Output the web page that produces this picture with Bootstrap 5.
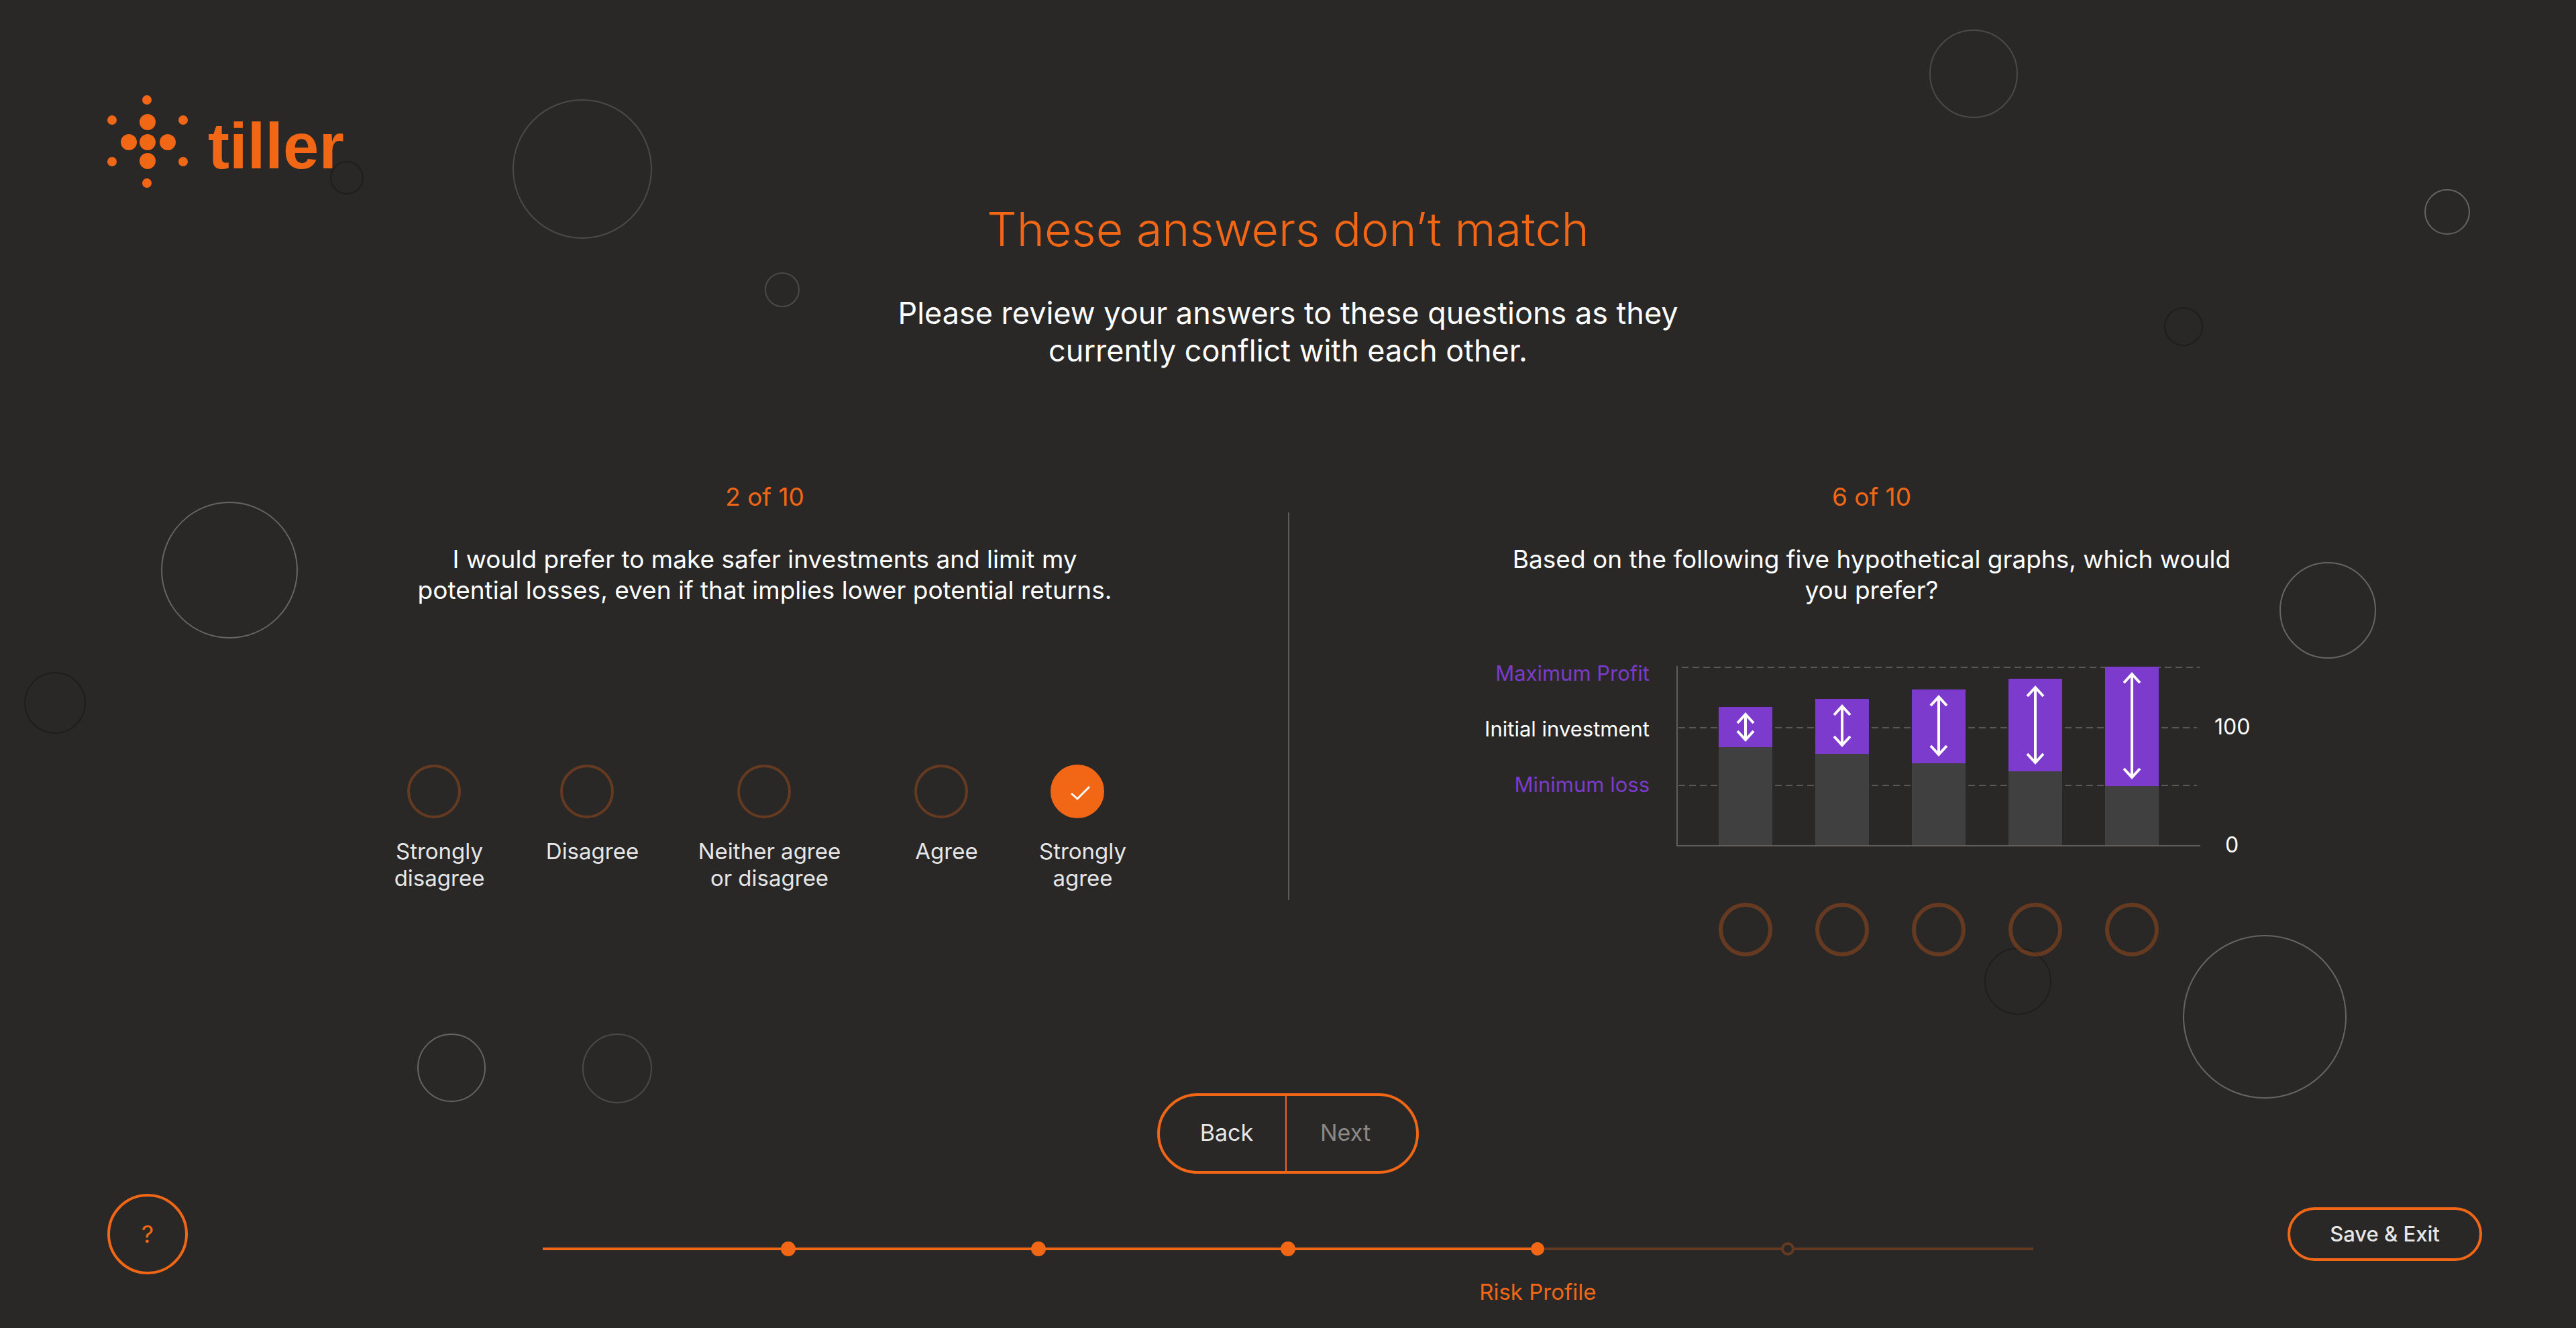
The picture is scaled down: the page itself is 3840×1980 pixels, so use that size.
<!DOCTYPE html>
<html lang="en">
<head>
<meta charset="utf-8">
<meta name="viewport" content="width=device-width, initial-scale=1">
<title>tiller – These answers don’t match</title>
<link rel="stylesheet" href="https://cdn.jsdelivr.net/npm/bootstrap@5.3.0/dist/css/bootstrap.min.css">
<style>
  :root {
    --ink: #292826;
    --brand: #f26716;
    --brand-dim: rgba(242, 103, 22, .3);
    --brand-track: #653a22;
    --violet: #7c3bcd;
    --soft: #e6e6e6;
  }
  body {
    background: var(--ink);
    color: #fff;
    font-family: Inter, "Open Sans", sans-serif;
    font-size: 33px;
    line-height: 40px;
  }
  .page { min-height: 100vh; isolation: isolate; padding-bottom: 34px; }
  .bubbles { z-index: -1; }
  .bubbles circle { fill: none; stroke-width: 2; }
  .b-light { stroke: #666564; }
  .b-mid { stroke: #4b4a49; }
  .b-dark { stroke: #1f1e1d; }

  .top-bar { padding: 142px 160px 0; }
  .brand-link { height: 138px; gap: 30px; color: var(--brand); }
  .brand-link:hover { color: var(--brand); }
  .brand-word { font: bold 96px/138px "Liberation Sans", Arial, sans-serif; padding-top: 14px; }

  .hero { padding-top: 22px; }
  .hero-title { font-size: 70px; line-height: 80px; font-weight: 300; color: var(--brand); margin-bottom: 57px; }
  .hero-text { font-size: 45px; line-height: 56px; max-width: 1240px; }

  .compare { display: grid; grid-template-columns: 1560fr 0 1740fr; padding: 167px 4.6875% 0 9.375%; }
  .compare-rule { width: 2px; margin: 46px 0 84px; background: #5c5b5a; }
  .q-count { font-size: 37px; line-height: 46px; color: var(--brand); margin-bottom: 47px; }
  .q-text { font-size: 37px; line-height: 46px; font-weight: 400; max-width: 1160px; }

  .answer-radio {
    appearance: none; -webkit-appearance: none;
    width: 80px; height: 80px; margin: 0; flex: none;
    border: 4px solid var(--brand-dim); border-radius: 50%;
    background: transparent center / 80px 80px no-repeat; background-origin: border-box;
  }
  .answer-radio.thick { border-width: 6px; }
  .answer-radio:checked {
    border-color: var(--brand);
    background-color: var(--brand);
    background-image: url("data:image/svg+xml,%3Csvg xmlns='http://www.w3.org/2000/svg' viewBox='0 0 80 80'%3E%3Cpath d='M31 43l9 8 18-18' fill='none' stroke='%23fff' stroke-width='3'/%3E%3C/svg%3E");
  }
  .likert { display: grid; grid-template-columns: 228px 228px 300px 228px 178px; padding: 237px 36px 0 0; }
  .likert label { gap: 29px; color: var(--soft); }
  .likert .answer-radio { margin-right: 16px; }

  .chart { display: grid; grid-template-columns: 300px 782px 100px; padding-top: 81px; }
  .chart-names { font-size: 31px; gap: 43px; padding-right: 40px; text-align: right; white-space: nowrap; }
  .violet { color: var(--violet); }
  .chart-plot { margin-top: 9px; }
  .chart-scale { font-size: 32px; padding: 80px 28px 0 20px; gap: 136px; text-align: center; }
  .chart-picks { grid-column: 2; padding: 66px 0 0 63px; gap: 64px; }

  .pager { height: 120px; border: 4px solid var(--brand); border-radius: 60px; width: 390px; }
  .pager button { flex: 1 1 0; border: 0; background: none; font-size: 34px; padding: 0 0 2px 12px; color: var(--soft); }
  .pager button + button { border-left: 2px solid var(--brand); padding: 0 18px 2px 0; }
  .pager button:disabled { color: #8a8988; }

  .bottom-bar { display: grid; grid-template-columns: 669fr 2222fr 669fr; padding: 30px 140px 0; align-items: start; }
  .help-btn { width: 120px; height: 120px; margin-left: 20px; border: 4px solid var(--brand); border-radius: 50%; background: none; color: var(--brand); font-size: 36px; }
  .exit-btn { width: 290px; height: 80px; margin-top: 20px; border: 4px solid var(--brand); border-radius: 40px; background: none; color: var(--soft); font-size: 31px; font-weight: 500; }

  .steps { padding: 70px 0 0; margin: 0; color: var(--brand); }
  .steps li { flex: 372 1 0; min-width: 0; gap: 32px; background: linear-gradient(var(--brand), var(--brand)) 0 10px / 100% 4px no-repeat; }
  .steps .stub { flex-grow: 180; }
  .steps li.current { background-image: linear-gradient(90deg, var(--brand) 50%, var(--brand-track) 50%); }
  .steps li.todo { background-image: linear-gradient(var(--brand-track), var(--brand-track)); }
  .step-dot { width: 22px; height: 22px; margin: 1px 0; border-radius: 50%; background: var(--brand); }
  .current .step-dot, .todo .step-dot { width: 20px; height: 20px; margin: 2px 0; }
  .todo .step-dot { border: 4px solid var(--brand-track); background: var(--ink); }
</style>
</head>
<body>
<div class="page position-relative d-flex flex-column">
  <svg class="bubbles position-absolute top-0 start-0 w-100 h-100" viewBox="0 0 3840 1980" preserveAspectRatio="xMidYMid slice" aria-hidden="true">
    <g class="b-light">
      <circle cx="3648" cy="316" r="33"/><circle cx="342" cy="850" r="101"/>
      <circle cx="3470" cy="910" r="71"/><circle cx="3376" cy="1516" r="121"/>
      <circle cx="673" cy="1592" r="50"/>
    </g>
    <g class="b-mid">
      <circle cx="868" cy="252" r="103"/><circle cx="1166" cy="432" r="25"/>
      <circle cx="2942" cy="110" r="65"/><circle cx="920" cy="1593" r="51"/>
    </g>
    <g class="b-dark">
      <circle cx="517" cy="265" r="24"/><circle cx="3255" cy="487" r="28"/>
      <circle cx="82" cy="1048" r="45"/><circle cx="3008" cy="1463" r="49"/>
    </g>
  </svg>

  <header class="top-bar d-flex">
    <a href="#" class="brand-link d-flex align-items-center text-decoration-none">
      <svg width="120" height="138" viewBox="0 0 120 138" fill="currentColor" aria-hidden="true">
        <circle cx="60" cy="40" r="12"/><circle cx="32" cy="70" r="12"/><circle cx="60" cy="70" r="12"/><circle cx="90" cy="70" r="12"/><circle cx="60" cy="98" r="12"/>
        <circle cx="59" cy="7" r="7"/><circle cx="7" cy="37" r="7"/><circle cx="113" cy="37" r="7"/><circle cx="7" cy="99" r="7"/><circle cx="113" cy="99" r="7"/><circle cx="59" cy="131" r="7"/>
      </svg>
      <span class="brand-word">tiller</span>
    </a>
  </header>

  <main>
    <section class="hero text-center">
      <h1 class="hero-title">These answers don’t match</h1>
      <p class="hero-text mx-auto mb-0">Please review your answers to these questions as they<br>currently conflict with each other.</p>
    </section>

    <div class="compare">
      <section class="d-flex flex-column align-items-center text-center" aria-labelledby="q2">
        <p class="q-count">2 of 10</p>
        <h2 class="q-text mb-0" id="q2">I would prefer to make safer investments and limit my<br>potential losses, even if that implies lower potential returns.</h2>
        <div class="likert" role="radiogroup" aria-labelledby="q2">
          <label class="d-flex flex-column align-items-center"><input class="answer-radio" type="radio" name="safer"><span>Strongly<br>disagree</span></label>
          <label class="d-flex flex-column align-items-center"><input class="answer-radio" type="radio" name="safer"><span>Disagree</span></label>
          <label class="d-flex flex-column align-items-center"><input class="answer-radio" type="radio" name="safer"><span>Neither agree<br>or disagree</span></label>
          <label class="d-flex flex-column align-items-center"><input class="answer-radio" type="radio" name="safer"><span>Agree</span></label>
          <label class="d-flex flex-column align-items-center"><input class="answer-radio" type="radio" name="safer" checked><span>Strongly<br>agree</span></label>
        </div>
      </section>

      <div class="compare-rule"></div>

      <section class="d-flex flex-column align-items-center text-center" aria-labelledby="q6">
        <p class="q-count">6 of 10</p>
        <h2 class="q-text mb-0" id="q6">Based on the following five hypothetical graphs, which would<br>you prefer?</h2>
        <div class="chart">
          <div class="chart-names d-flex flex-column">
            <span class="violet">Maximum Profit</span>
            <span>Initial investment</span>
            <span class="violet">Minimum loss</span>
          </div>
          <svg class="chart-plot" width="782" height="269" viewBox="0 0 782 269" role="img" aria-label="Maximum profit and minimum loss of five graphs">
            <g stroke="#5a5958" stroke-width="2" stroke-dasharray="10 6">
              <path d="M8 2H780M3 92H776M3 178H776"/>
            </g>
            <g stroke="#5f5e5d" stroke-width="2"><path d="M1 0V268M0 268H781"/></g>
            <g fill="#404040">
              <rect x="63" y="121" width="80" height="146"/><rect x="207" y="131" width="80" height="136"/><rect x="351" y="145" width="80" height="122"/><rect x="495" y="157" width="80" height="110"/><rect x="639" y="179" width="80" height="88"/>
            </g>
            <g fill="#7c3bcd">
              <rect x="63" y="61" width="80" height="60"/><rect x="207" y="49" width="80" height="82"/><rect x="351" y="35" width="80" height="110"/><rect x="495" y="19" width="80" height="138"/><rect x="639" y="1" width="80" height="178"/>
            </g>
            <g fill="none" stroke="#fff" stroke-width="4">
              <path d="M103 72V110M91 85l12-13 12 13M91 97l12 13 12-13"/>
              <path d="M247 60V118M235 73l12-13 12 13M235 105l12 13 12-13"/>
              <path d="M391 46V132M379 59l12-13 12 13M379 119l12 13 12-13"/>
              <path d="M535 32V144M523 45l12-13 12 13M523 131l12 13 12-13"/>
              <path d="M679 12V166M667 25l12-13 12 13M667 153l12 13 12-13"/>
            </g>
          </svg>
          <div class="chart-scale d-flex flex-column"><span>100</span><span>0</span></div>
          <div class="chart-picks d-flex" role="radiogroup" aria-labelledby="q6">
            <input class="answer-radio thick" type="radio" name="graph" aria-label="Graph 1">
            <input class="answer-radio thick" type="radio" name="graph" aria-label="Graph 2">
            <input class="answer-radio thick" type="radio" name="graph" aria-label="Graph 3">
            <input class="answer-radio thick" type="radio" name="graph" aria-label="Graph 4">
            <input class="answer-radio thick" type="radio" name="graph" aria-label="Graph 5">
          </div>
        </div>
      </section>
    </div>
  </main>

  <div class="pager d-flex mx-auto mt-auto">
    <button type="button">Back</button>
    <button type="button" disabled>Next</button>
  </div>

  <footer class="bottom-bar">
    <button class="help-btn" type="button" aria-label="Help">?</button>
    <ol class="steps list-unstyled d-flex">
      <li class="stub" aria-hidden="true"></li>
      <li class="d-flex flex-column align-items-center"><span class="step-dot"></span></li>
      <li class="d-flex flex-column align-items-center"><span class="step-dot"></span></li>
      <li class="d-flex flex-column align-items-center"><span class="step-dot"></span></li>
      <li class="current d-flex flex-column align-items-center" aria-current="step"><span class="step-dot"></span><span>Risk Profile</span></li>
      <li class="todo d-flex flex-column align-items-center"><span class="step-dot"></span></li>
      <li class="stub todo" aria-hidden="true"></li>
    </ol>
    <button class="exit-btn ms-auto" type="button">Save &amp; Exit</button>
  </footer>
</div>
<script src="https://cdn.jsdelivr.net/npm/bootstrap@5.3.0/dist/js/bootstrap.bundle.min.js"></script>
</body>
</html>
